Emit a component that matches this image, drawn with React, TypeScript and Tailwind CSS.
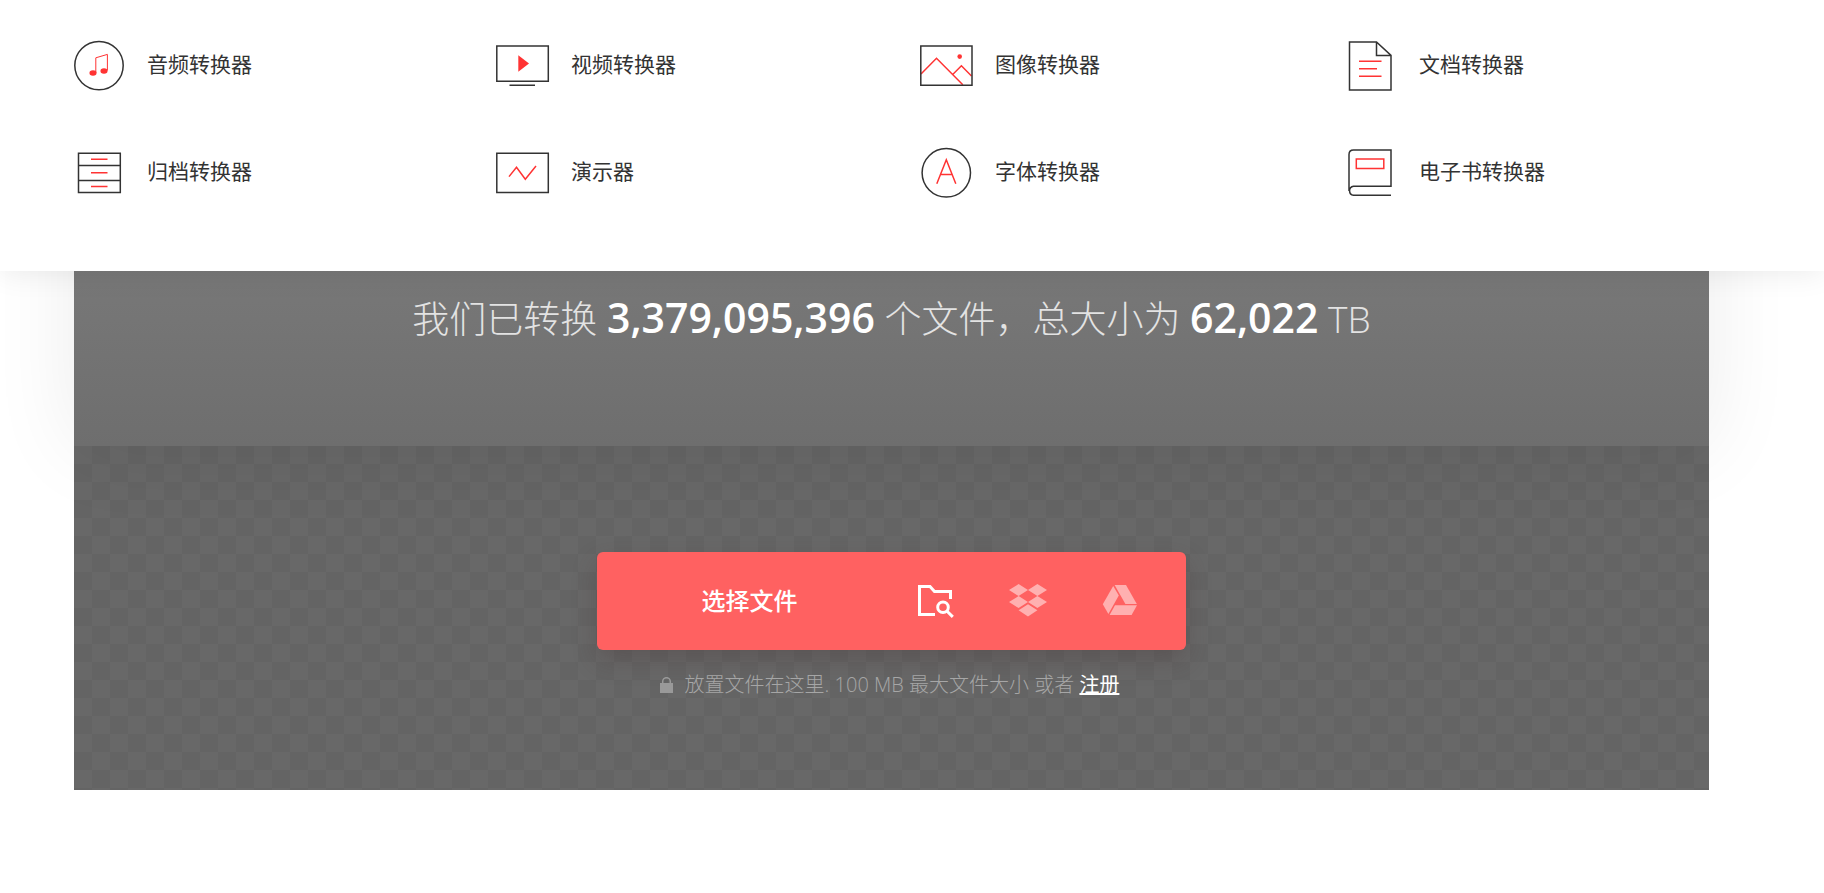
import type { ReactNode } from 'react'

interface Converter {
  label: string
  icon: ReactNode
}

const CONVERTERS: Converter[] = [
  {
    label: '音频转换器',
    icon: (
      <>
        <circle cx="27" cy="27.6" r="24.2" />
        <g className="stroke-[#ff3333]">
          <path d="M23.8 35V19.8L35.4 16.4V32.5" strokeWidth="1" />
          <ellipse cx="21" cy="35" rx="2.8" ry="2" className="fill-[#ff3333]" />
          <ellipse cx="32" cy="33" rx="2.8" ry="2" className="fill-[#ff3333]" />
        </g>
      </>
    ),
  },
  {
    label: '视频转换器',
    icon: (
      <>
        <path d="M.8 8H52.3V43.2H.8ZM13.5 47.2H39" />
        <path d="M22.3 17.3V33.7L33 25.5Z" className="fill-[#ff3333] stroke-none" />
      </>
    ),
  },
  {
    label: '图像转换器',
    icon: (
      <>
        <path d="M1 36L16.5 20.2L42.8 46.8M32.7 36.5L41.4 27.8L51.5 38" className="stroke-[#ff3333]" />
        <circle cx="39.7" cy="18.6" r="2.3" className="fill-[#ff3333] stroke-none" />
        <path d="M.8 8H52V47.2H.8Z" />
      </>
    ),
  },
  {
    label: '文档转换器',
    icon: (
      <>
        <path d="M5.5 4H32.5L47 17.4V52H5.5ZM32.5 4V17.4H47" />
        <path d="M15 23.2H37.5M15 30.8H33M15 38.2H37.5" className="stroke-[#ff3333]" />
      </>
    ),
  },
  {
    label: '归档转换器',
    icon: (
      <>
        <path d="M6.5 8.2H48.3V47.5H6.5ZM6.5 20.5H48.3M6.5 35.5H48.3" />
        <path d="M19 14.2H35.5M19 27.8H35.5M19 41.4H35.5" className="stroke-[#ff3333]" />
      </>
    ),
  },
  {
    label: '演示器',
    icon: (
      <>
        <path d="M.8 8.2H52.3V47.5H.8Z" />
        <path d="M13 31.6L20.5 22.2L29.3 34.3L40 21" className="stroke-[#ff3333]" />
      </>
    ),
  },
  {
    label: '字体转换器',
    icon: (
      <>
        <circle cx="26.3" cy="27.8" r="24.2" />
        <path d="M16.8 38.8L26.3 14.8L35.8 38.8M20.4 29.6H32.2" className="stroke-[#ff3333]" />
      </>
    ),
  },
  {
    label: '电子书转换器',
    icon: (
      <>
        <path d="M47 50.3H9.5A4.6 4.6 0 0 1 9.5 41.2H47V5H9.5Q5 5 5 9.5V46" />
        <path d="M12.3 14H39.8V23.4H12.3Z" className="stroke-[#ff3333]" />
      </>
    ),
  },
]

function ConverterMenu() {
  return (
    <nav className="relative z-20 bg-white pt-[38px] pr-14 pb-[72px] pl-[72px] shadow-[0_0_30px_rgba(0,0,0,0.09)]">
      <ul className="grid grid-cols-4 gap-y-[53px]">
        {CONVERTERS.map((c) => (
          <li key={c.label}>
            <a href="#" className="flex items-start gap-[21px] text-[21px] leading-[52px] text-[#333]">
              <svg
                viewBox="0 0 54 54"
                className="size-[54px] fill-none stroke-[#333] stroke-[1.5]"
                aria-hidden="true"
              >
                {c.icon}
              </svg>
              {c.label}
            </a>
          </li>
        ))}
      </ul>
    </nav>
  )
}

function FolderSearchIcon() {
  return (
    <svg viewBox="0 0 36 36" className="size-9 fill-none stroke-white stroke-[3]" aria-hidden="true">
      <path d="M17 32.5H1.5V4.5H12L16.5 9.5H32.5V17" />
      <circle cx="25" cy="25.2" r="5.3" />
      <path d="M28.8 29L34.8 34.8" />
    </svg>
  )
}

function DropboxIcon() {
  return (
    <svg viewBox="0 0 38 34" className="h-[34px] w-[38px] fill-[#ffb0b0]" aria-hidden="true">
      <path d="M9.6 1L19 7L9.6 13L0 7ZM28.4 1L38 7L28.4 13L19 7ZM9.6 13L19 19L9.6 25L0 19ZM28.4 13L38 19L28.4 25L19 19ZM19 21.2L28.4 27.3L19 33.5L9.6 27.3Z" />
    </svg>
  )
}

function DriveIcon() {
  return (
    <svg viewBox="0 0 36 32" className="h-8 w-9 fill-[#ffb0b0]" aria-hidden="true">
      <path d="M11.2 2L16.8 11.5L6.4 30L.8 20.3Z" />
      <path d="M12.6 1H24L34.8 20H23.4Z" />
      <path d="M13 21.3H35L29.6 31H7.6Z" />
    </svg>
  )
}

function Stats() {
  return (
    <section className="relative z-10 -mt-24 bg-linear-to-b from-[#7d7d7d] to-[#6e6e6e] pt-[113px] pb-[98px] text-center shadow-[0_0_80px_rgba(0,0,0,0.08)]">
      <p className="text-[37px] leading-[58px] font-light text-[#e3e3e3]">
        我们已转换 <strong className="text-[41px] font-semibold text-white">3,379,095,396</strong>{' '}
        个文件，总大小为 <strong className="text-[41px] font-semibold text-white">62,022</strong> TB
      </p>
    </section>
  )
}

function Uploader() {
  return (
    <section className="flex flex-col items-center bg-[repeating-conic-gradient(#646464_0_25%,#686868_0_50%)] bg-[length:36px_36px] px-4 pt-[106px] pb-[87px]">
      <div className="flex h-[98px] w-full max-w-[589px] items-stretch rounded-md bg-[#ff6161] pr-5 shadow-[0_10px_24px_rgba(70,50,50,0.3)]">
        <button type="button" className="flex-1 pl-3 text-2xl font-medium text-white">
          选择文件
        </button>
        <button type="button" aria-label="选择文件夹" className="flex w-[92px] items-center justify-center pb-0.5">
          <FolderSearchIcon />
        </button>
        <button type="button" aria-label="Dropbox" className="flex w-[92px] items-center justify-center pb-0.5">
          <DropboxIcon />
        </button>
        <button type="button" aria-label="Google Drive" className="flex w-[92px] items-center justify-center pb-0.5">
          <DriveIcon />
        </button>
      </div>
      <div className="mt-[17px] flex items-center gap-3 pr-1 text-xl leading-9 font-light text-[#a6a6a6]">
        <svg viewBox="0 0 13 16" className="h-4 w-[13px] fill-[#999]" aria-hidden="true">
          <path d="M0 6H13V16H0Z" />
          <path d="M2.7 7V4.5A3.8 3.8 0 0 1 10.3 4.5V7" className="fill-none stroke-[#999] stroke-[1.5]" />
        </svg>
        <p>
          放置文件在这里. 100 MB 最大文件大小 或者{' '}
          <a href="#" className="font-normal text-white underline">
            注册
          </a>
        </p>
      </div>
    </section>
  )
}

export default function App() {
  return (
    <div className="min-h-screen overflow-x-hidden bg-white font-['Open_Sans','Noto_Sans_CJK_SC',sans-serif]">
      <ConverterMenu />
      <main className="mr-[115px] ml-[74px]">
        <Stats />
        <Uploader />
      </main>
    </div>
  )
}
